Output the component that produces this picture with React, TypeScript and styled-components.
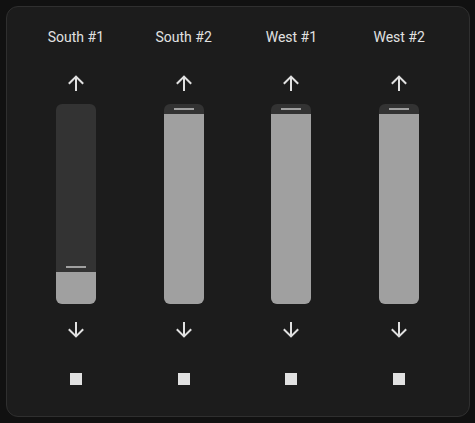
import React from "react";
import styled, {createGlobalStyle} from "styled-components";

const GlobalStyle = createGlobalStyle`
    html, body {
        margin: 0;
        padding: 0;
        background: #111111;
        font-family: Roboto, "Noto Sans", "Liberation Sans", sans-serif;
    }
`;

const Page = styled.main`
    padding: 6px;
    width: 475px;
    box-sizing: border-box;
`;

const Card = styled.section`
    width: 464px;
    box-sizing: border-box;
    background-color: #1c1c1c;
    border: 1px solid #2f2f2f;
    border-radius: 12px;
    padding: 20px 16px 25px 15px;
    display: grid;
    grid-template-columns: repeat(4, 1fr);
`;

const Column = styled.div`
    display: flex;
    flex-direction: column;
    align-items: center;
`;

const Label = styled.div`
    font-size: 14px;
    line-height: 20px;
    color: #e1e1e1;
    white-space: nowrap;
`;

const IconButton = styled.button<{ $gap: number }>`
    margin-top: ${props => props.$gap}px;
    width: 24px;
    height: 24px;
    padding: 0;
    border: none;
    background: none;
    color: #e1e1e1;
    display: flex;
    cursor: pointer;
`;

const Track = styled.div`
    margin-top: 9px;
    width: 40px;
    height: 200px;
    border-radius: 6px;
    overflow: hidden;
    background-color: #333333;
    display: flex;
    flex-direction: column;
    justify-content: flex-end;
`;

const Handle = styled.div`
    height: 10px;
    display: flex;
    align-items: center;
    justify-content: center;

    &::after {
        content: "";
        width: 20px;
        height: 2px;
        background-color: #a0a0a0;
    }
`;

const Fill = styled.div`
    background-color: #a0a0a0;
`;

const ArrowUp = () => <svg width="24" height="24" viewBox="0 0 24 24" fill="currentColor">
    <path d="M13,20H11V8L5.5,13.5L4.08,12.08L12,4.16L19.92,12.08L18.5,13.5L13,8V20Z"/>
</svg>;

const ArrowDown = () => <svg width="24" height="24" viewBox="0 0 24 24" fill="currentColor">
    <path d="M11,4H13V16L18.5,10.5L19.92,11.92L12,19.84L4.08,11.92L5.5,10.5L11,16V4Z"/>
</svg>;

const Stop = () => <svg width="24" height="24" viewBox="0 0 24 24" fill="currentColor">
    <path d="M18,18H6V6H18V18Z"/>
</svg>;

const covers: { name: string; position: number }[] = [
    {name: 'South #1', position: 17},
    {name: 'South #2', position: 100},
    {name: 'West #1', position: 100},
    {name: 'West #2', position: 100},
];

export default function App(): React.ReactElement {
    return <>
        <GlobalStyle/>
        <Page>
            <Card>
                {covers.map((cover) => (
                    <Column key={cover.name}>
                        <Label>{cover.name}</Label>
                        <IconButton $gap={24} aria-label="open"><ArrowUp/></IconButton>
                        <Track>
                            <Handle/>
                            <Fill style={{height: Math.round(cover.position * 1.9) + 'px'}}/>
                        </Track>
                        <IconButton $gap={14} aria-label="close"><ArrowDown/></IconButton>
                        <IconButton $gap={25} aria-label="stop"><Stop/></IconButton>
                    </Column>
                ))}
            </Card>
        </Page>
    </>;
}
